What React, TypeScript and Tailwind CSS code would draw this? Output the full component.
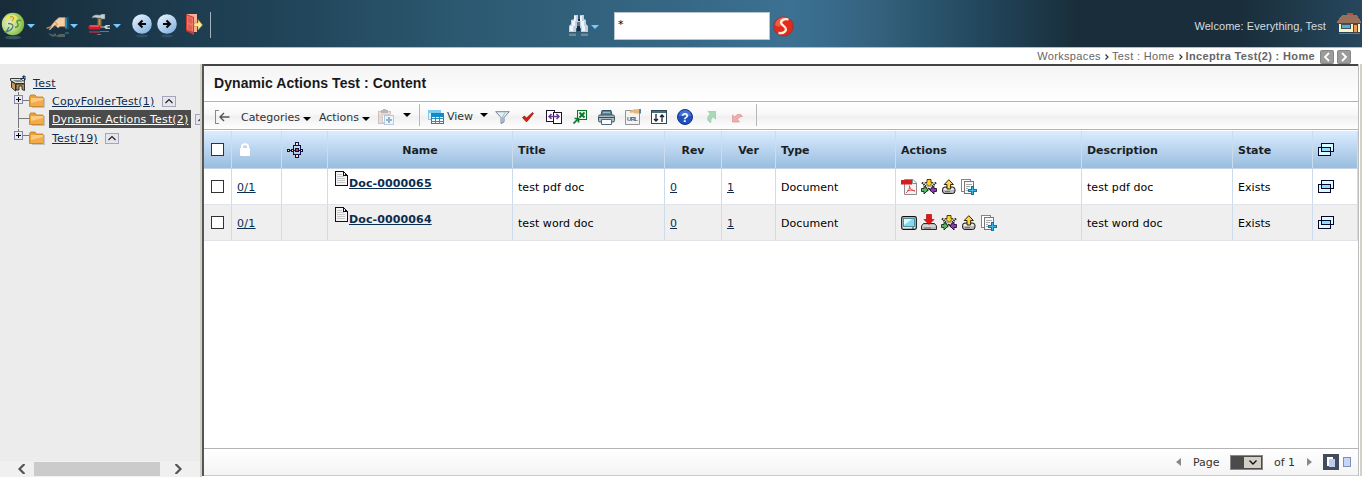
import type { ReactNode } from "react";

const COLS =
  "grid grid-cols-[28px_50px_46px_185px_152px_57px_54px_120px_186px_151px_80px_45px]";

function Ico({ w = 16, h = 16, crisp = true, className = "", children }: { w?: number; h?: number; crisp?: boolean; className?: string; children: ReactNode }) {
  return (
    <svg width={w} height={h} viewBox={`0 0 ${w} ${h}`} fill="none" shapeRendering={crisp ? "crispEdges" : "auto"} className={`block shrink-0 ${className}`}>
      {children}
    </svg>
  );
}

function Caret({ className = "", fill = "#000" }: { className?: string; fill?: string }) {
  return (
    <Ico w={8} h={4} crisp={false} className={className}>
      <path d="M0 0h8L4 4z" fill={fill} />
    </Ico>
  );
}

function LogoOrb() {
  return (
    <Ico w={24} h={28} crisp={false}>
      <defs>
        <radialGradient id="orb" cx="35%" cy="45%" r="70%">
          <stop offset="0" stopColor="#e3edc6" />
          <stop offset="0.500" stopColor="#bddb86" />
          <stop offset="1" stopColor="#70b032" />
        </radialGradient>
      </defs>
      <ellipse cx="12" cy="25.500" rx="8" ry="1.800" fill="#5f8291" opacity="0.450" />
      <circle cx="12" cy="12" r="11.200" fill="url(#orb)" />
      <path d="M5 8c2-4 7-5 9-3s-1 4-3 5" stroke="#f3e94f" strokeWidth="2.600" />
      <path d="M9 5c4-1 5 1 2 4" stroke="#b3863c" strokeWidth="1" />
      <path d="M7 11.500c5 0 6 2 4 5-1.500 2-3.500 3-6 3.500 1-1 2-3 3-5" stroke="#4f7f86" strokeWidth="1.300" />
      <path d="M20 8.500c-3-1-5 .5-3.500 2.700s.5 3.800-2.500 4.300" stroke="#4e9636" strokeWidth="1.500" />
    </Ico>
  );
}

function Hand() {
  return (
    <Ico w={24} h={22} crisp={false}>
      <path d="M18 1.500h5v11h-4z" fill="#2787ae" />
      <path d="M21 1.500h2v11h-2z" fill="#174a6c" />
      <path d="M0.500 12l4-1.500L9 5l4-3.500h6v9h-5l-2 1.500-3-3-5 5-1-.5 2.500-3L1.500 12.500z" fill="#f3d0a4" stroke="#b58459" strokeWidth="0.600" />
      <path d="M9 6l2.500 2L8 11.500" stroke="#a0714a" strokeWidth="0.700" />
      <path d="M1 17c2 1 4 0 6 2l2-2 2 3 2-2h6v3h-7l-3-1-2 1-3-2z" fill="#a39b88" opacity="0.450" />
      <path d="M19 16h4v2h-4z" fill="#2787ae" opacity="0.500" />
    </Ico>
  );
}

function Tools() {
  return (
    <Ico w={22} h={22} crisp={false}>
      <path d="M4 3.500c1-2 3-3 6-2.500h3V0h4v5h-4V4H9C7 3 6 3.500 4 4z" fill="#c3cdd2" stroke="#5a666d" strokeWidth="0.500" />
      <path d="M9.500 4.500h4v8h-4z" fill="#94703a" />
      <path d="M11 4.500h1v8h-1z" fill="#bd9657" />
      <path d="M12 12.500h4l2-1.500h4v1.200h-2.500v1.600H22V15h-4l-2-1.500h-4z" fill="#c6ced2" />
      <rect x="0.500" y="11" width="12" height="4.500" rx="1.500" fill="#dc1726" />
      <path d="M2 12h9" stroke="#ff7d86" />
      <path d="M1 17h11v2H1z" fill="#b0303f" opacity="0.750" />
      <path d="M12 17h9v1h-9zM9 20h4v1H9z" fill="#9aa9b1" opacity="0.600" />
    </Ico>
  );
}

function ArrowOrb({ left = false }: { left?: boolean }) {
  return (
    <Ico w={20} h={24} crisp={false}>
      <defs>
        <linearGradient id={left ? "ballL" : "ballR"} x1="0" y1="0" x2="0.700" y2="1">
          <stop stopColor="#f1f8ff" />
          <stop offset="1" stopColor="#86b5e3" />
        </linearGradient>
      </defs>
      <ellipse cx="10" cy="22" rx="6" ry="1.500" fill="#7da3c4" opacity="0.200" />
      <circle cx="10" cy="10" r="9.800" fill={left ? "url(#ballL)" : "url(#ballR)"} />
      <path d={left ? "M14 10H7.500M10.500 6.500L7 10l3.500 3.500" : "M6 10h6.500M9.500 6.500L13 10l-3.500 3.500"} stroke="#080808" strokeWidth="2.100" />
    </Ico>
  );
}

function Exit() {
  return (
    <Ico w={17} h={22} crisp={false}>
      <path d="M1 0h10v18H2z" fill="#f6b198" />
      <path d="M0 0l8 3v18l-8-4z" fill="#c93c32" />
      <path d="M1 1.500l6 2.300v14L1 15.500z" fill="#ef7767" />
      <path d="M3 3.500v5M5 4.500v5M3 10.500v5M5 11.500v5" stroke="#cf4b40" />
      <path d="M8 9h4V5.500l4.500 5.500-4.500 5v-3.500H8z" fill="#fdeb9b" stroke="#b88b37" strokeWidth="0.600" />
    </Ico>
  );
}

function Binoculars() {
  return (
    <Ico w={21} h={22} crisp={false}>
      <path d="M6 0h4v4h2V0h4v4l2 1v4l2 2v7h-7v-5H8v5H1v-7l2-2V5l3-1z" fill="#c2d0e0" />
      <path d="M6 1h2v5H6zM12 1h2v5h-2zM4 6h3v5H4zM13 6h3v5h-3zM2 11h3v5H2zM14 11h3v5h-3z" fill="#eef4fc" />
      <path d="M10 4h2v2h-2zM9 11h3v5H9z" fill="#1b2c3c" />
      <path d="M9 7h3v4H9z" fill="#607488" />
      <path d="M1 17h7v1.500H1zM13 17h7v1.500h-7z" fill="#42596c" />
      <path d="M1 18.500h7V21H1zM13 18.500h7V21h-7z" fill="#8ba6bc" opacity="0.600" />
    </Ico>
  );
}

function SwooshOrb() {
  return (
    <Ico w={21} h={21} crisp={false}>
      <circle cx="10.500" cy="10.500" r="9.700" fill="#e22b1d" stroke="#8e3436" strokeWidth="0.800" />
      <path d="M2 9a8.700 8.700 0 0 1 12-7L6 11z" fill="#f47f5d" opacity="0.600" />
      <path d="M15.500 3.500c-4-1-7.500.5-7.500 3 0 3 5.500 4 5 7-.4 3-4 4-7.500 3.500" stroke="#fff3df" strokeWidth="2.300" />
    </Ico>
  );
}

function House() {
  return (
    <Ico w={25} h={23}>
      <path d="M10 0h6v3h-6z" fill="#b65332" />
      <path d="M5 2h15l4 7v1H0V9z" fill="#98705c" />
      <path d="M2 10h21v9H2z" fill="#fbf3c6" />
      <path d="M1 10h23v1H1z" fill="#5c4132" />
      <path d="M4.500 11.500h9v4h-9z" fill="#45b5da" stroke="#44515a" />
      <path d="M16.500 11.500h4v8h-4z" fill="#f09b55" stroke="#653c29" />
      <path d="M2 20h21v1H2z" fill="#b9ae85" opacity="0.500" />
    </Ico>
  );
}

function Folder() {
  return (
    <Ico w={17} h={15} crisp={false}>
      <path d="M3 4h13v10H3z" fill="#a9a9a9" opacity="0.600" />
      <path d="M0.500 3l1-2h4.500l1.500 2h6.500v9.500H0.500z" fill="#e9a136" stroke="#c27b21" strokeWidth="0.800" />
      <path d="M2 4h12v8H2z" fill="#f3ab48" />
      <path d="M2 4h12v2L2 9z" fill="#fdc97c" />
    </Ico>
  );
}

function RootIcon() {
  return (
    <Ico w={17} h={17} crisp={false}>
      <path d="M0.500 3.500h9l5 3v2h-9l-5-3z" fill="#e9e1c6" stroke="#252525" strokeWidth="0.900" />
      <path d="M3 5h7l3 2H6z" fill="#7892a4" />
      <path d="M1.500 6.500l4 2.500v7l-4-3.500z" fill="#c09a62" stroke="#252525" strokeWidth="0.900" />
      <path d="M6 9h8.500v6.500l-2.500-1V11H9v4H6z" fill="#b38d50" stroke="#252525" strokeWidth="0.900" />
      <path d="M10 3.500h4.500V6M13.500 0.500v3M12 2l3-1v4" stroke="#17304d" />
    </Ico>
  );
}

function Plus({ className = "" }: { className?: string }) {
  return (
    <Ico w={9} h={9} className={className}>
      <rect x="0.500" y="0.500" width="8" height="8" fill="#e9e9f5" stroke="#8585a8" />
      <path d="M2 4.500h5M4.500 2v5" stroke="#000" />
    </Ico>
  );
}

function Up() {
  return (
    <Ico w={14} h={11}>
      <rect x="0.500" y="0.500" width="13" height="10" fill="#e6e6ee" stroke="#a4a4bc" />
      <path d="M3.500 7L7 3.500 10.500 7" stroke="#222" shapeRendering="auto" strokeWidth="1.200" />
    </Ico>
  );
}

function Page() {
  return (
    <Ico w={13} h={15}>
      <path d="M0.500 0.500h8l3.500 4v10H0.500z" fill="#f4f4f4" stroke="#101025" />
      <path d="M8.500 0.500v4H12" stroke="#101025" />
      <path d="M2 3.500h5M2 5.500h7M2 7.500h8M2 9.500h8M2 11.500h8" stroke="#c8c8c8" />
    </Ico>
  );
}

function Windows() {
  return (
    <Ico w={16} h={13}>
      <rect x="3" y="0" width="13" height="9" fill="#06062c" />
      <rect x="4" y="1" width="11" height="7" fill="#d9fbff" />
      <rect x="0" y="4" width="13" height="9" fill="#06062c" />
      <rect x="1" y="5" width="11" height="7" fill="#d9fbff" />
      <rect x="3" y="4" width="10" height="5" fill="#06062c" />
      <rect x="4" y="5" width="8" height="3" fill="#8edcff" />
    </Ico>
  );
}

function Pdf() {
  return (
    <Ico w={16} h={16} crisp={false}>
      <path d="M3.500 0.500H12l3.500 3.500v11.500h-12z" fill="#f4f4f4" stroke="#8c8c8c" />
      <path d="M11.500 1v3.500H15" fill="#fff" stroke="#8c8c8c" />
      <path d="M0 1h11v4.500H0z" fill="#d51e20" />
      <path d="M8.500 6.500c.5 3-1 5.500-3.500 7.500M8.500 7.500c.7 2.500 2.500 4 5.500 4.500M6 12c2.500-1 5-1.300 8 0" stroke="#dd3b37" strokeWidth="0.900" />
    </Ico>
  );
}

function Transfer() {
  return (
    <Ico w={16} h={16} crisp={false}>
      <path d="M1 3.500l5 5M15 3.500l-5 5M6 12l2-3 2 3" stroke="#222" strokeWidth="2" strokeDasharray="1.400 0.700" />
      <path d="M6 0.500h4v3h2L8 7.500l-4-4h2z" fill="#ffd326" stroke="#3b2f05" strokeWidth="0.900" />
      <path d="M0.500 9.500H3V7.200L7 11l-4 4v-2.500H0.500z" fill="#5cb561" stroke="#17301a" strokeWidth="0.900" />
      <path d="M15.500 9.500H13V7.200L9 11l4 4v-2.500h2.500z" fill="#8d3bbd" stroke="#24102f" strokeWidth="0.900" />
    </Ico>
  );
}

function Checkin() {
  return (
    <Ico w={16} h={16} crisp={false}>
      <rect x="1.500" y="8" width="12.500" height="6.500" rx="2.500" fill="#b9b9b9" stroke="#1a1a1a" />
      <path d="M3 10h9.500" stroke="#eee" strokeWidth="2" />
      <path d="M4 12.700h5" stroke="#666" />
      <path d="M6 10V5.500H3.200L7.800 0.700l4.600 4.800H9.600V10z" fill="#ffd54c" stroke="#2d2508" />
    </Ico>
  );
}

function Checkout() {
  return (
    <Ico w={16} h={17} crisp={false}>
      <path d="M2.500 9.500h11l2 2.500v3.500h-15V12z" fill="#b9b9b9" stroke="#2a2a2a" />
      <path d="M1.500 12h13" stroke="#ececec" />
      <path d="M3 14h7" stroke="#666" />
      <path d="M5.500 0.500h5v5H13l-5 5-5-5h2.500z" fill="#e41414" stroke="#a80d0d" strokeWidth="0.700" />
    </Ico>
  );
}

function CopyPlus() {
  return (
    <Ico w={16} h={16}>
      <path d="M0.500 0.500h9v12h-9z" fill="#fff" stroke="#858585" />
      <path d="M3.500 2.500h9v12h-9z" fill="#f8f8f8" stroke="#777" />
      <path d="M5 5.500h6M5 7.500h4M5 9.500h2M5 11.500h2" stroke="#aaa" />
      <path d="M10 7h3v3h3v3h-3v3h-3v-3H7v-3h3z" fill="#176f9f" />
      <path d="M11 8h1v3h3v1h-3v3h-1v-3H8v-1h3z" fill="#35b9ef" />
    </Ico>
  );
}

function Monitor() {
  return (
    <Ico w={16} h={14} crisp={false}>
      <rect x="0.700" y="0.700" width="14.600" height="12.600" rx="1.500" fill="#e8e8e8" stroke="#111" strokeWidth="1.200" />
      <rect x="2.500" y="2.500" width="11" height="8" fill="#86d8ee" stroke="#347d91" strokeWidth="0.800" />
      <path d="M3 3h8l-8 6z" fill="#dafcff" />
      <path d="M11 12h2" stroke="#333" />
    </Ico>
  );
}

function Network() {
  return (
    <Ico w={16} h={16}>
      <path d="M8 3.500H6.500v9H8M12 3.500h1.500v9H12M2 8.500h12" stroke="#101044" />
      <g fill="#f3e6b8" stroke="#101044">
        <rect x="8.500" y="0.500" width="3" height="3" />
        <rect x="8.500" y="12.500" width="3" height="3" />
        <rect x="0.500" y="7.500" width="2" height="2" />
        <rect x="4.500" y="7.500" width="2" height="2" />
        <rect x="13.500" y="7.500" width="2" height="2" />
        <rect x="8.500" y="6.500" width="3" height="3" fill="#d7393f" />
      </g>
    </Ico>
  );
}

function Lock() {
  return (
    <Ico w={10} h={13} crisp={false}>
      <path d="M2 6V3.500C2 0.500 8 0.500 8 3.500V6" stroke="#fff" strokeWidth="2" />
      <rect y="5" width="10" height="8" rx="1" fill="#fff" />
    </Ico>
  );
}

function Clipboard() {
  return (
    <Ico w={17} h={16} className="opacity-50">
      <path d="M0.500 2.500h12v12h-12z" fill="#dfc3ae" stroke="#a98f7e" />
      <path d="M3 1h7v3H3zM5 0h3v1H5z" fill="#777" />
      <path d="M4.500 5.500h8v8h-8z" fill="#fff" stroke="#aaa" />
      <path d="M6.500 6.500h9v9h-9z" fill="#eaf6ff" stroke="#7a9fc0" />
      <path d="M8 11h6M11 8v6" stroke="#2277bb" strokeWidth="2" />
    </Ico>
  );
}

function TableIcon() {
  return (
    <Ico w={16} h={14}>
      <path d="M0.500 0.500h12v9h-12z" fill="#d9f2fd" stroke="#86c8e6" />
      <path d="M0 0h13v3H0z" fill="#7accf2" />
      <path d="M3.500 3.500h12v10h-12z" fill="#f4fcff" stroke="#2580b0" />
      <path d="M3 4h13v3H3z" fill="#168ac8" />
      <path d="M7.500 7v7M11.500 7v7M4 8.500h12M4 11h12" stroke="#2d8dbb" />
    </Ico>
  );
}

function Funnel() {
  return (
    <Ico w={15} h={13} crisp={false}>
      <path d="M0.700 0.700h13.600L9 6.500V11l-3 1.500v-6z" fill="#e3eef5" stroke="#65798a" strokeWidth="0.900" />
      <path d="M10 1.500L7.500 6v5" stroke="#9eb9cd" />
    </Ico>
  );
}

function Check() {
  return (
    <Ico w={12} h={10} crisp={false}>
      <path d="M0.500 5.500L2.500 4l2 2L10.500 0.500l1 1L5 9.500H4z" fill="#d8200d" stroke="#8b1208" strokeWidth="0.700" />
    </Ico>
  );
}

function Compare() {
  return (
    <Ico w={16} h={14}>
      <path d="M0.500 0.500h8v11h-8z" fill="#fff" stroke="#1a1629" />
      <path d="M7.500 2.500h8v11h-8z" fill="#fff" stroke="#1a1629" />
      <path d="M3 6.500h10M5.500 4L3 6.500 5.500 9M10.500 4L13 6.500 10.500 9" stroke="#69398d" strokeWidth="1.500" shapeRendering="auto" />
    </Ico>
  );
}

function Excel() {
  return (
    <Ico w={14} h={14}>
      <path d="M4.500 0.500h9v9h-9z" fill="#e8f8e8" stroke="#087226" />
      <path d="M6.500 2.500l5 5M11.500 2.500l-5 5" stroke="#0a7328" strokeWidth="1.800" shapeRendering="auto" />
      <path d="M0.500 13.500l4.500-4.500M1.500 8.500h4V12.500" stroke="#0b7828" strokeWidth="1.700" shapeRendering="auto" />
    </Ico>
  );
}

function Printer() {
  return (
    <Ico w={17} h={15} crisp={false}>
      <path d="M4 0.500h9l1 5H3z" fill="#5d8395" stroke="#33525f" />
      <path d="M5 2.500h7" stroke="#9bbac7" />
      <rect x="0.500" y="5" width="16" height="7" rx="1.500" fill="#a9bac4" stroke="#3d5866" />
      <path d="M1 7.500h15" stroke="#37525f" />
      <path d="M3.500 9.500h10v5h-10z" fill="#f9fcff" stroke="#4f6b79" />
    </Ico>
  );
}

function UrlIcon() {
  return (
    <svg width="16" height="16" viewBox="0 0 16 16" className="block shrink-0">
      <path d="M0.500 1.500h14v14H0.500z" fill="#f3f3f3" stroke="#929292" />
      <path d="M5 2l4-1.700h5v4.200H10l-2-1-3 .5z" fill="#e7b875" />
      <path d="M14 0h2v4.500h-2z" fill="#5183a4" />
      <text x="2" y="11.500" fontSize="6" fontWeight="bold" fontFamily="Liberation Sans, sans-serif" textLength="11" fill="#555">URL</text>
    </svg>
  );
}

function SortIcon() {
  return (
    <Ico w={16} h={14}>
      <path d="M0.500 0.500h15v13H0.500z" fill="#fff" stroke="#2e4856" />
      <path d="M1 1h14v2H1z" fill="#4b6c7d" />
      <path d="M5 4v7M3 9l2 2 2-2M11 12V5M9 7l2-2 2 2" stroke="#123" strokeWidth="1.300" shapeRendering="auto" />
    </Ico>
  );
}

function Help() {
  return (
    <svg width="16" height="16" viewBox="0 0 16 16" className="block shrink-0">
      <circle cx="8" cy="8" r="7.500" fill="#2050bd" stroke="#143384" />
      <path d="M2 7a6 6 0 0 1 12 0z" fill="#577fd8" opacity="0.700" />
      <text x="8" y="12.500" textAnchor="middle" fontSize="12" fontWeight="bold" fontFamily="Liberation Sans, sans-serif" fill="#fff">?</text>
    </svg>
  );
}

function DiagArrow({ down = false }: { down?: boolean }) {
  return (
    <Ico w={11} h={12} crisp={false}>
      {down ? (
        <path d="M0.500 4v7h7L5.500 8.700c1-2.200 2.500-3.200 5-3.200C9 2.500 5 2.500 2.800 6z" fill="#efaeae" stroke="#dc9292" strokeWidth="0.700" />
      ) : (
        <path d="M3 0.500h7.500v7.500L8.200 5.800C6.500 7 5.500 8.800 5.800 11.500 1.500 10 2 5.500 5.300 2.900z" fill="#acd8b9" stroke="#91c8a2" strokeWidth="0.700" />
      )}
    </Ico>
  );
}

function Box() {
  return <span className="block h-[13px] w-[13px] border border-[#333] bg-white" />;
}

function Cell({ children, className = "" }: { children?: ReactNode; className?: string }) {
  return <div className={`flex items-center border-r border-[#cddcec] pl-[5px] ${className}`}>{children}</div>;
}

function Row({ name, title, alt = false }: { name: string; title: string; alt?: boolean }) {
  return (
    <div className={`${COLS} h-9 border-b border-[#dfe3e8] tracking-[0.050px] ${alt ? "bg-[#efefef]" : "bg-white"}`}>
      <Cell className="pl-[7px]"><Box /></Cell>
      <Cell className="pt-[2px] tracking-[0.300px] text-[#0b2d50] underline">0/1</Cell>
      <Cell />
      <Cell className="items-start pl-[7px] pt-[2px]">
        <Page />
        <span className="ml-[1px] pt-[5px] font-bold leading-[15px] tracking-[0.120px] text-[#0b2d50] underline">{name}</span>
      </Cell>
      <Cell className="pt-[2px]">{title}</Cell>
      <Cell className="pt-[2px] text-[#0b2d50] underline">0</Cell>
      <Cell className="pt-[2px] text-[#0b2d50] underline">1</Cell>
      <Cell className="pt-[2px]">Document</Cell>
      <Cell className="gap-1">
        {alt ? (
          <>
            <Monitor /><Checkout /><Transfer /><Checkin /><CopyPlus />
          </>
        ) : (
          <>
            <Pdf /><Transfer /><Checkin /><CopyPlus />
          </>
        )}
      </Cell>
      <Cell className="pt-[2px]">{title}</Cell>
      <Cell className="pt-[2px]">Exists</Cell>
      <Cell><Windows /></Cell>
    </div>
  );
}

function Header() {
  return (
    <header className="flex h-12 shrink-0 items-start border-b border-[#b5bec5] bg-[linear-gradient(90deg,#172c39_0%,#1c384a_10%,#204357_20%,#2d5a73_35%,#346581_47%,#3c7193_58%,#35637f_64%,#22475d_72%,#192e3a_79%,#192e3a_91%,#27475e_100%)]">
      <div className="flex w-[568px] items-start">
        <div className="pl-px pt-3"><LogoOrb /></div>
        <Caret className="ml-[2px] mt-6" fill="#75c9ff" />
        <div className="ml-[11px] mt-4"><Hand /></div>
        <Caret className="mt-6" fill="#75c9ff" />
        <div className="ml-[10px] mt-[14px]"><Tools /></div>
        <Caret className="ml-[3px] mt-6" fill="#75c9ff" />
        <div className="ml-[11px] mt-[14px]"><ArrowOrb left /></div>
        <div className="ml-[5px] mt-[14px]"><ArrowOrb /></div>
        <div className="ml-[9px] mt-[14px]"><Exit /></div>
        <div className="ml-[7px] mt-3 h-[26px] w-px bg-[#a2b1ba]" />
      </div>
      <div className="mt-[15px]"><Binoculars /></div>
      <Caret className="ml-[2px] mt-[25px]" fill="#75c9ff" />
      <div className="ml-[15px] mt-3 h-7 w-[156px] border border-[#b9c5cd] bg-white pl-[3px] pt-1 text-[11px] leading-4 text-black">*</div>
      <div className="ml-[3px] mt-4"><SwooshOrb /></div>
      <span className="ml-auto mt-[19px] font-['Liberation_Sans',sans-serif] text-[11px] leading-[15px] tracking-[0.070px] text-[#d4dce1]">Welcome: Everything, Test</span>
      <div className="ml-[11px] mt-[13px]"><House /></div>
    </header>
  );
}

function Nav({ left = false }: { left?: boolean }) {
  return (
    <Ico w={14} h={14} crisp={false}>
      <rect x="0.500" y="0.500" width="13" height="13" rx="1" fill="#9b9b9b" stroke="#868686" />
      <path d={left ? "M9 3L5 7l4 4" : "M5 3l4 4-4 4"} stroke="#fff" strokeWidth="1.800" />
    </Ico>
  );
}

function Crumbs() {
  return (
    <div className="flex h-4 shrink-0 items-center justify-end bg-white pr-[11px] font-['Liberation_Sans',sans-serif] text-[11px] leading-4 tracking-[0.350px] text-[#666]">
      <span>Workspaces</span>
      <Ico w={4} h={6} crisp={false} className="ml-[4px] mr-[3px] mt-px"><path d="M0.500 0.500l2.500 2.500L0.500 5.500" stroke="#333" strokeWidth="1.200" /></Ico>
      <span>Test : Home</span>
      <Ico w={4} h={6} crisp={false} className="ml-[4px] mr-[3px] mt-px"><path d="M0.500 0.500l2.500 2.500L0.500 5.500" stroke="#333" strokeWidth="1.200" /></Ico>
      <b>Inceptra Test(2) : Home</b>
      <span className="ml-[5px] mt-[2px]"><Nav left /></span>
      <span className="ml-[3px] mt-[2px]"><Nav /></span>
    </div>
  );
}

function Branch({ plus = false, last = false, selected = false, children }: { plus?: boolean; last?: boolean; selected?: boolean; children: string }) {
  return (
    <div className="flex h-[18px] w-[186px] items-center overflow-hidden">
      <div className="grid h-[18px] w-[15px] shrink-0">
        <Ico w={15} h={18} className="[grid-area:1/1]">
          <path d={last ? "M4.500 0v6.500H15" : "M4.500 0v18M4.500 8.500H15"} stroke="#777" />
        </Ico>
        {plus && <Plus className={`[grid-area:1/1] ${last ? "mt-[2px]" : "mt-[3px]"}`} />}
      </div>
      <Folder />
      <span className={`ml-[3px] flex h-[18px] shrink-0 items-center px-[3px] underline ${selected ? "bg-[#4b4b4b] tracking-[0.150px] text-white" : "tracking-[0.200px] text-[#0b2d50]"}`}>{children}</span>
      <span className="ml-[4px] shrink-0"><Up /></span>
    </div>
  );
}

function Sidebar() {
  return (
    <aside className="flex w-[200px] shrink-0 flex-col overflow-hidden bg-[#ececec]">
      <div className="flex h-[28px] items-center pl-[10px] pt-[11px]">
        <RootIcon />
        <span className="ml-[6px] tracking-[0.300px] text-[#0b2d50] underline">Test</span>
      </div>
      <div className="flex flex-col pl-[14px]">
        <Branch plus>CopyFolderTest(1)</Branch>
        <Branch selected>Dynamic Actions Test(2)</Branch>
        <div className="pt-px"><Branch plus last>Test(19)</Branch></div>
      </div>
      <div className="mt-auto flex h-4 items-center bg-[#f0f0f0] pl-[16px]">
        <Ico w={9} h={10} crisp={false}><path d="M8.500 0L3.500 5l5 5" stroke="#555" strokeWidth="2.200" /></Ico>
        <span className="ml-[9px] h-[14px] w-[126px] bg-[#cbcbcb]" />
        <Ico w={9} h={10} crisp={false} className="ml-[15px]"><path d="M0.500 0l5 5-5 5" stroke="#555" strokeWidth="2.200" /></Ico>
      </div>
    </aside>
  );
}

function Toolbar() {
  return (
    <div className="flex h-7 shrink-0 items-center border-b border-[#b4b4b4] bg-[linear-gradient(#fff_0%,#f8f8f8_45%,#f0f0f0_55%,#fff_100%)] pl-[11px] pt-[3px] text-[#333]">
      <Ico w={15} h={14}>
        <path d="M4 0.500H0.500v13H4" stroke="#888" />
        <path d="M5 7h9.500M9 3L5 7l4 4" stroke="#555" strokeWidth="1.400" shapeRendering="auto" />
      </Ico>
      <span className="ml-[11px] w-[59px]">Categories</span>
      <Caret className="ml-[3px] mt-[3px]" />
      <span className="ml-[8px] w-[40px]">Actions</span>
      <Caret className="ml-[3px] mt-[3px]" />
      <span className="ml-2"><Clipboard /></span>
      <Caret className="-mt-1 ml-[8px]" />
      <span className="-mt-1 ml-2 h-[22px] w-px bg-[#b7b7b7]" />
      <span className="ml-[8px]"><TableIcon /></span>
      <span className="-mt-[2px] ml-[3px] w-[27px]">View</span>
      <Caret className="-mt-1 ml-[6px]" />
      <span className="ml-[7px]"><Funnel /></span>
      <span className="ml-[12px]"><Check /></span>
      <span className="ml-[12px]"><Compare /></span>
      <span className="-mt-px ml-[11px]"><Excel /></span>
      <span className="ml-[11px]"><Printer /></span>
      <span className="-mt-px ml-[10px]"><UrlIcon /></span>
      <span className="ml-[10px]"><SortIcon /></span>
      <span className="ml-[10px]"><Help /></span>
      <span className="-mt-px ml-[12px]"><DiagArrow /></span>
      <span className="-mt-px ml-[16px]"><DiagArrow down /></span>
      <span className="-mt-1 ml-[13px] h-[22px] w-px bg-[#b7b7b7]" />
    </div>
  );
}

function Content() {
  return (
    <main className="flex min-w-0 flex-1 flex-col border-t-2 border-[#444] bg-white">
      <div className="flex h-9 shrink-0 items-center border-b border-[#b4b4b4] bg-gradient-to-b from-[#f4f4f4] to-white pl-[10px] font-['Liberation_Sans',sans-serif] text-[14px] font-bold tracking-[0.070px] text-[#1a1a1a]">
        Dynamic Actions Test : Content
      </div>
      <Toolbar />
      <div className={`${COLS} mt-px h-[38px] shrink-0 border-b border-[#c4d4e4] bg-gradient-to-b from-[#dcecff] to-[#98bddf] font-bold text-[#1a1f26]`}>
        <Cell className="border-[#a5c4e5] pl-[7px]"><Box /></Cell>
        <Cell className="border-[#a5c4e5] pl-[8px]"><Lock /></Cell>
        <Cell className="border-[#a5c4e5]"><Network /></Cell>
        <Cell className="justify-center border-[#a5c4e5] pl-0 pr-[5px] pt-[2px]">Name</Cell>
        <Cell className="border-[#a5c4e5] pt-[2px]">Title</Cell>
        <Cell className="justify-center border-[#a5c4e5] pl-0 pr-[5px] pt-[2px]">Rev</Cell>
        <Cell className="justify-center border-[#a5c4e5] pl-0 pr-[5px] pt-[2px]">Ver</Cell>
        <Cell className="border-[#a5c4e5] pt-[2px]">Type</Cell>
        <Cell className="border-[#a5c4e5] pt-[2px]">Actions</Cell>
        <Cell className="border-[#a5c4e5] pt-[2px]">Description</Cell>
        <Cell className="border-[#a5c4e5] pt-[2px]">State</Cell>
        <Cell className="border-[#a5c4e5]"><Windows /></Cell>
      </div>
      <Row name="Doc-0000065" title="test pdf doc" />
      <Row name="Doc-0000064" title="test word doc" alt />
      <footer className="mt-auto flex h-[28px] shrink-0 items-center justify-end border-b border-t border-b-[#ccc] border-t-[#b4b4b4] bg-gradient-to-b from-white to-[#f4f4f4] pr-[7px] text-[#333]">
        <Ico w={5} h={8} crisp={false}><path d="M5 0v8L0 4z" fill="#888" /></Ico>
        <span className="ml-[12px] w-[27px]">Page</span>
        <span className="ml-[10px] flex h-[15px] w-[33px] items-center justify-end border border-[#888] bg-[#4b4b4b] pr-px">
          <span className="flex h-[11px] w-[17px] items-center justify-center bg-[#d4d0c8]">
            <Ico w={8} h={5} crisp={false}><path d="M0.500 0.500L4 4l3.500-3.500" stroke="#111" strokeWidth="1.400" /></Ico>
          </span>
        </span>
        <span className="ml-[11px] w-[21px] whitespace-nowrap">of 1</span>
        <Ico w={5} h={8} crisp={false} className="ml-[12px]"><path d="M0 0v8l5-4z" fill="#888" /></Ico>
        <Ico w={16} h={16} className="-mt-px ml-[11px]">
          <rect width="16" height="16" fill="#444b5a" />
          <rect x="4" y="3" width="6" height="9" fill="#fff" />
          <rect x="6" y="5" width="6" height="8" fill="#b9cdf3" />
        </Ico>
        <Ico w={8} h={10} className="-mt-px ml-1"><rect x="0.500" y="0.500" width="7" height="9" fill="#c3d5fb" stroke="#8290b0" /></Ico>
      </footer>
    </main>
  );
}

export default function App() {
  return (
    <div className="flex h-[477px] w-[1362px] flex-col overflow-hidden bg-white font-['DejaVu_Sans',sans-serif] text-[11px] leading-[15px] tracking-[-0.040px] text-black">
      <Header />
      <Crumbs />
      <div className="flex min-h-0 flex-1">
        <Sidebar />
        <div className="flex min-w-0 flex-1 border-l-2 border-[#d2cfc8] bg-white pb-px">
          <div className="w-[2px] bg-[#555]" />
          <Content />
          <div className="mr-px w-px bg-[#bdbdbd]" />
          <div className="w-[2px] bg-[#d5d0c9]" />
        </div>
      </div>
    </div>
  );
}
